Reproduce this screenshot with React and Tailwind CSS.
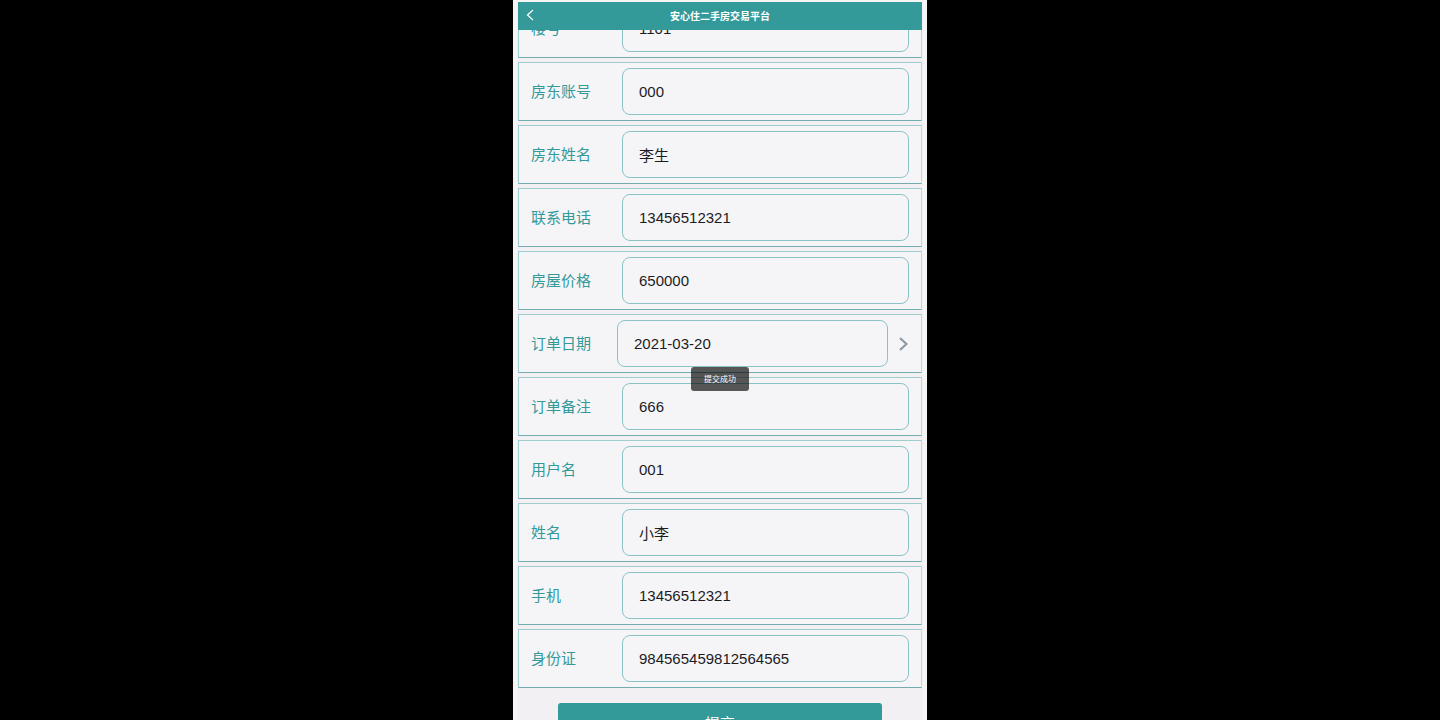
import React from "react";

const fields = [
  { id: "building", label: "楼号", value: "1101" },
  { id: "landlord-account", label: "房东账号", value: "000" },
  { id: "landlord-name", label: "房东姓名", value: "李生" },
  { id: "landlord-phone", label: "联系电话", value: "13456512321" },
  { id: "price", label: "房屋价格", value: "650000" },
  { id: "order-date", label: "订单日期", value: "2021-03-20", picker: true },
  { id: "order-note", label: "订单备注", value: "666" },
  { id: "username", label: "用户名", value: "001" },
  { id: "full-name", label: "姓名", value: "小李" },
  { id: "mobile", label: "手机", value: "13456512321" },
  { id: "id-card", label: "身份证", value: "984565459812564565" },
];

function Field({ id, label, value, picker }) {
  return (
    <div className="flex items-center border border-t-[#9fcdcf] border-r-[#b9dbdc] border-b-[#72adb0] border-l-[#9fcdcf] bg-[#f5f5f8] py-[5px] px-3">
      <label
        htmlFor={id}
        className={`${picker ? "w-[86px]" : "w-[91px]"} shrink-0 text-[15px] leading-5 text-[#339999]`}
      >
        {label}
      </label>
      <input
        id={id}
        type="text"
        defaultValue={value}
        className="h-[47px] min-w-0 flex-1 rounded-lg border border-[#8ac3c6] bg-transparent px-4 text-[15px] text-[#1c1c1f] outline-none"
      />
      {picker && (
        <svg
          viewBox="0 0 10 14"
          className="ml-[11px] h-[14px] w-[10px] shrink-0"
          fill="none"
          stroke="#8796a5"
          strokeWidth="2"
          aria-hidden="true"
        >
          <path d="M1 1 L7.5 7 L1 13" />
        </svg>
      )}
    </div>
  );
}

export default function App() {
  return (
    <div className="flex h-screen justify-center overflow-hidden bg-black font-['Liberation_Sans','Noto_Sans_CJK_SC',sans-serif]">
      <div className="relative w-full max-w-[414px] overflow-hidden border-x-4 border-[#f5f5f6] bg-[#f2f0f3] px-px">
        <header className="absolute inset-x-px top-0 z-10 border-t-2 border-[#f5f5f6] bg-[#339999] text-white">
          <div className="flex h-7 items-center justify-center">
            <button type="button" aria-label="返回" className="absolute left-2 flex h-[26px] items-center self-start">
              <svg viewBox="0 0 8 12" className="h-3 w-2" fill="none" stroke="currentColor" strokeWidth="1.2" aria-hidden="true">
                <path d="M7 1 L1.5 6 L7 11" />
              </svg>
            </button>
            <h1 className="pt-0.5 text-[10px] leading-4 font-bold">安心住二手房交易平台</h1>
          </div>
        </header>

        <form className="-mt-px" onSubmit={(event) => event.preventDefault()}>
          <div className="flex flex-col gap-1">
            {fields.map((field) => (
              <Field key={field.id} {...field} />
            ))}
          </div>
          <button
            type="submit"
            className="mx-auto mt-[15px] block h-[42px] w-4/5 rounded-[3px] bg-[#339999] text-[15px] text-white"
          >
            提交
          </button>
        </form>

        <div
          role="status"
          className="absolute top-[367px] left-1/2 flex h-6 -translate-x-1/2 items-center rounded-[3px] bg-black/65 px-[13px] pt-0.5 text-[8px] whitespace-nowrap text-white"
        >
          提交成功
        </div>
      </div>
    </div>
  );
}
